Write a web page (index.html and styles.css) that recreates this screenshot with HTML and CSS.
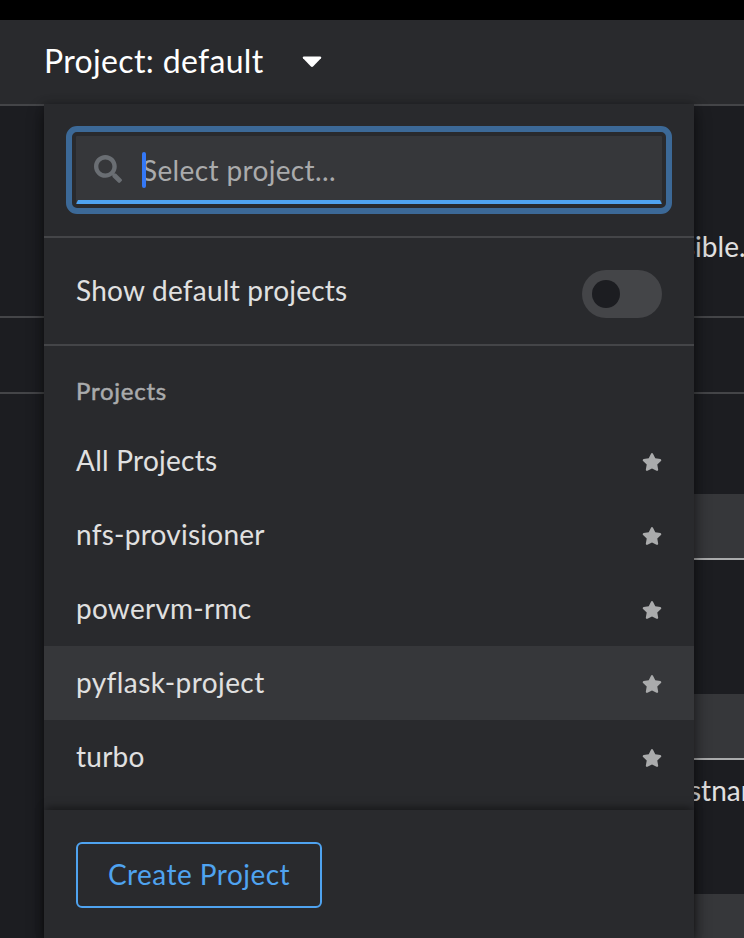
FILE: index.html
```html
<!DOCTYPE html>
<html lang="en">
<head>
<meta charset="utf-8">
<title>Projects</title>
<link rel="stylesheet" href="styles.css">
</head>
<body>
<svg class="defs" width="0" height="0"><symbol id="star" viewBox="0 0 576 512"><path d="M259.3 17.8L194 150.2 47.9 171.500c-26.200 3.800-36.700 36.100-17.700 54.600l105.700 103-25 145.500c-4.500 26.300 23.200 46 46.400 33.700L288 439.600l130.700 68.700c23.200 12.200 50.900-7.400 46.400-33.700l-25-145.500 105.700-103c19-18.500 8.500-50.800-17.700-54.600L382 150.200 316.700 17.800c-11.700-23.600-45.600-23.900-57.400 0z"/></symbol></svg>
<div class="masthead"></div>
<header class="bar">
  <button class="toggle"><span class="t-title">Project: default</span><svg class="caret" viewBox="0 0 20 12"><path d="M1.600 0.500H18.400Q20 0.900 19 2.300L11.300 10.300Q10 11.500 8.700 10.300L1 2.300Q0 0.900 1.600 0.500Z"/></svg></button>
  <div class="menu">
    <div class="search"><div class="field">
      <svg class="glass" viewBox="0 0 512 512"><path d="M505 442.700L405.300 343c-4.500-4.500-10.600-7-17-7H372c27.600-35.300 44-79.700 44-128C416 93.100 322.900 0 208 0S0 93.100 0 208s93.100 208 208 208c48.300 0 92.700-16.400 128-44v16.300c0 6.400 2.500 12.500 7 17l99.700 99.700c9.400 9.400 24.600 9.400 33.900 0l28.300-28.300c9.400-9.400 9.400-24.600.1-34zM208 336c-70.700 0-128-57.200-128-128 0-70.700 57.200-128 128-128 70.700 0 128 57.200 128 128 0 70.700-57.200 128-128 128z"/></svg>
      <span class="cursor"></span><span class="t-search">Select project...</span>
    </div></div>
    <div class="switch-row"><span class="t-show">Show default projects</span><span class="switch"></span></div>
    <div class="group"><span class="t-group">Projects</span></div>
    <div class="list">
      <div class="item"><span class="t-all">All Projects</span><svg><use href="#star"/></svg></div>
      <div class="item"><span class="t-nfs">nfs-provisioner</span><svg><use href="#star"/></svg></div>
      <div class="item"><span class="t-power">powervm-rmc</span><svg><use href="#star"/></svg></div>
      <div class="item active"><span class="t-py">pyflask-project</span><svg><use href="#star"/></svg></div>
      <div class="item"><span class="t-turbo">turbo</span><svg><use href="#star"/></svg></div>
    </div>
    <div class="footer"><button class="create"><span class="t-create">Create Project</span></button></div>
  </div>
</header>
<main>
  <div class="intro"><span class="t-ible">sible.</span></div>
  <div class="tabs"></div>
  <div class="form"><div class="input"></div><div class="input"></div><div class="help"><span class="t-host">stnam</span></div><div class="input last"></div></div>
</main>
</body>
</html>
```
FILE: styles.css
```css
* { box-sizing: border-box; }
body { margin: 0; height: 938px; overflow: hidden; background: #1c1d21; color: #e0e0e0; font: 28px/42px Lato, sans-serif; font-variant-ligatures: none; }
button { font: inherit; color: inherit; background: none; border: 0; padding: 0; }
span { white-space: nowrap; }
.defs { position: absolute; }
.masthead { height: 20px; background: #000; }
.bar { position: relative; height: 86px; padding-left: 44px; background: #292a2d; border-bottom: 2px solid #444548; }
.toggle { display: flex; align-items: center; height: 82px; font-size: 32px; color: #fff; }
.t-title { letter-spacing: .34px; }
.caret { width: 20px; height: 12px; margin: 1px 0 0 38px; fill: #fff; }
.menu { position: absolute; z-index: 2; left: 44px; top: 84px; width: 650px; height: 836px; background: #292a2d; box-shadow: 0 8px 16px rgba(3,3,3,.48), 0 0 8px rgba(3,3,3,.24); }
.search { height: 134px; padding: 32px; border-bottom: 2px solid #444548; }
.field { display: flex; align-items: center; height: 68px; padding: 3px 0 0 16px; background: #36373a; border: solid #36373a; border-width: 0 2px 4px; border-bottom-color: #4fa3f0; outline: 6px solid #3c6997; outline-offset: 4px; border-radius: 1px; color: #aaabac; }
.glass { width: 28px; height: 28px; margin-bottom: 1px; fill: #6a6e73; }
.cursor { z-index: 1; width: 4px; height: 36px; margin-left: 20px; border-radius: 2px; background: #3478f6; }
.t-search { margin-left: -4px; letter-spacing: .36px; }
.switch-row { display: flex; justify-content: space-between; height: 108px; padding: 32px; border-bottom: 2px solid #444548; }
.t-show { margin-top: -1px; letter-spacing: .24px; }
.switch { width: 80px; height: 48px; padding: 10px; border-radius: 24px; background: #444548; }
.switch::before { content: ""; display: block; width: 28px; height: 28px; border-radius: 50%; background: #1c1d21; }
.group { height: 78px; padding: 24px 32px; font-size: 24px; color: #aaabac; }
.t-group { letter-spacing: .75px; -webkit-text-stroke: .5px #aaabac; }
.item { display: flex; align-items: center; justify-content: space-between; height: 74px; padding: 0 32px; }
.item span { margin-top: -2px; letter-spacing: .25px; }
.item .t-py { letter-spacing: .42px; }
.item svg { width: 20px; height: 18px; margin-top: 2px; fill: #aaabac; }
.active { background: #36373a; }
.footer { height: 130px; margin-top: 16px; padding: 32px; background: #292a2d; box-shadow: 0 -4px 8px -2px rgba(3,3,3,.5); }
.create { width: 246px; height: 66px; padding-bottom: 2px; border: 2px solid #4fa3f0; border-radius: 6px; color: #4fa3f0; }
.t-create { letter-spacing: .46px; }
.intro { height: 212px; padding: 119px 0 0 683px; border-bottom: 2px solid #444548; }
.tabs { height: 76px; border-bottom: 2px solid #444548; }
.form { height: 544px; overflow: hidden; padding: 100px 0 0 600px; }
.input { height: 66px; margin-bottom: 134px; background: #36373a; border-bottom: 2px solid #aaabac; }
.help { margin-top: -125px; height: 125px; padding-left: 89px; }
```
